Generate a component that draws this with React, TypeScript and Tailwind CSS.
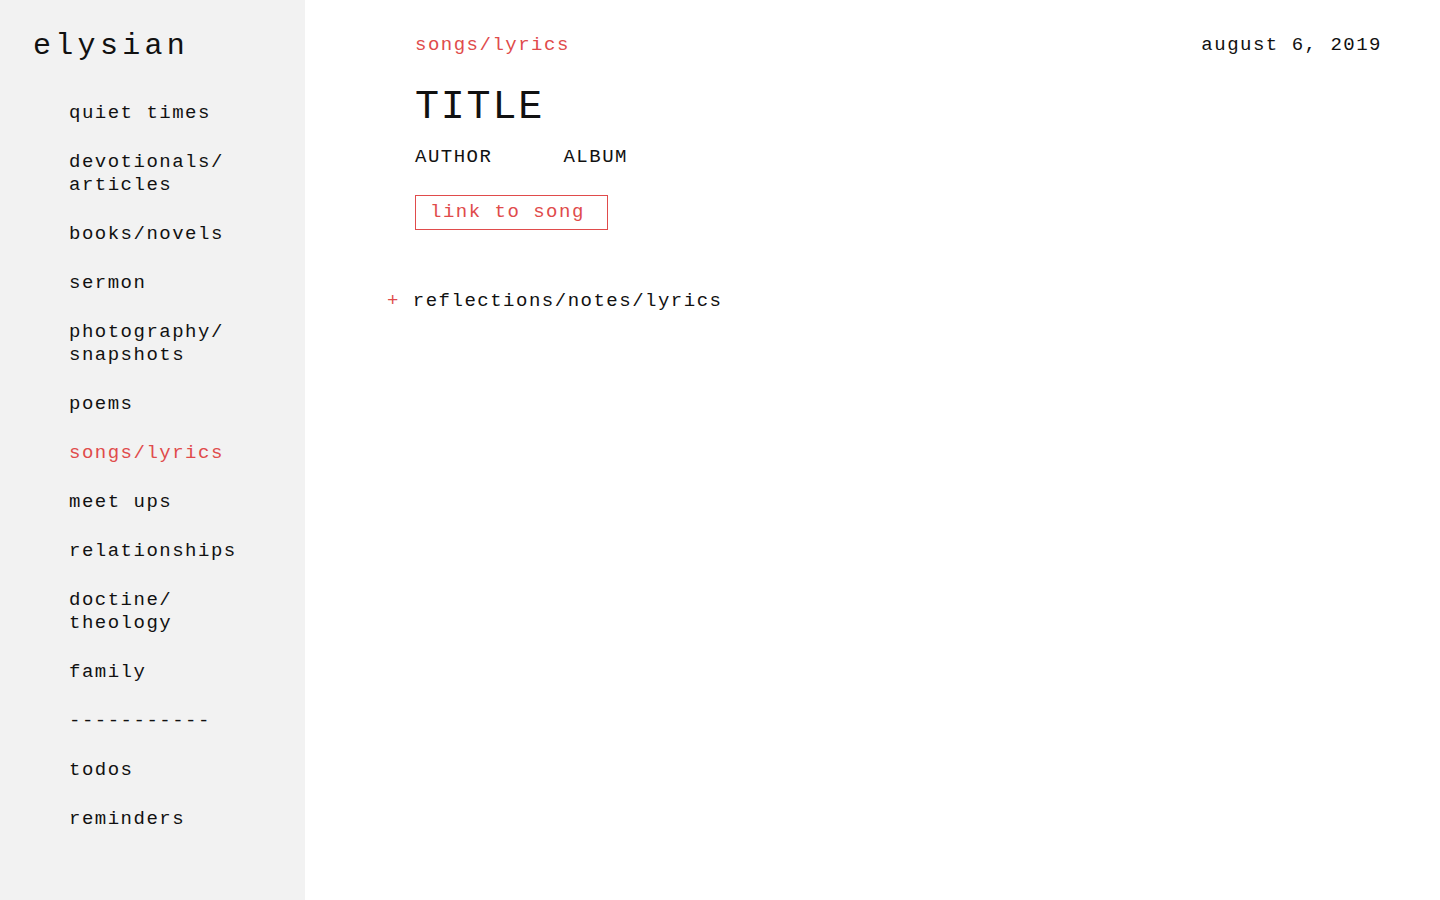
const NAV: { label: React.ReactNode; active?: boolean }[] = [
  { label: "quiet times" },
  { label: <>devotionals/<br />articles</> },
  { label: "books/novels" },
  { label: "sermon" },
  { label: <>photography/<br />snapshots</> },
  { label: "poems" },
  { label: "songs/lyrics", active: true },
  { label: "meet ups" },
  { label: "relationships" },
  { label: <>doctine/<br />theology</> },
  { label: "family" },
  { label: "-----------" },
  { label: "todos" },
  { label: "reminders" },
];

const mono = "font-['Liberation_Mono','DejaVu_Sans_Mono',monospace]";

export default function App() {
  return (
    <div className={`flex min-h-screen w-full bg-white text-[#111] ${mono}`}>
      {/* sidebar */}
      <aside className="w-[305px] shrink-0 bg-[#f2f2f2] min-h-[900px]">
        <div className="pl-[33px] pt-[28px] text-[30px] leading-[36px] tracking-[4.3px]">elysian</div>
        <nav className="mt-[38px] pl-[69px] flex flex-col gap-[26px]">
          {NAV.map((item, i) => (
            <a
              key={i}
              href="#"
              className={`block text-[19px] leading-[23px] tracking-[1.5px] ${item.active ? "text-[#e04b4b]" : "text-[#111]"}`}
            >
              {item.label}
            </a>
          ))}
        </nav>
      </aside>

      {/* entry */}
      <main className="flex-1 pl-[110px] pr-[58px] pt-[34px]">
        <div className="flex items-start justify-between text-[19px] leading-[23px] tracking-[1.5px]">
          <span className="text-[#e04b4b]">songs/lyrics</span>
          <span>august 6, 2019</span>
        </div>
        <h1 className="mt-[27px] text-[40px] leading-[48px] tracking-[1.8px]">TITLE</h1>
        <div className="mt-[14px] flex gap-[71px] text-[19px] leading-[23px] tracking-[1.5px]">
          <span>AUTHOR</span>
          <span>ALBUM</span>
        </div>
        <div className="mt-[26px] flex">
          <div className="bg-[#e04b4b] p-px">
            <a
              href="#"
              className="flex h-[33px] items-center bg-white pl-[14px] pr-[22px] text-[19px] tracking-[1.5px] text-[#e04b4b]"
            >
              link to song
            </a>
          </div>
        </div>
        <div className="mt-[60px] -ml-[28px] text-[19px] leading-[23px] tracking-[1.5px]">
          <span className="text-[#e04b4b]">+</span> reflections/notes/lyrics
        </div>
      </main>
    </div>
  );
}
